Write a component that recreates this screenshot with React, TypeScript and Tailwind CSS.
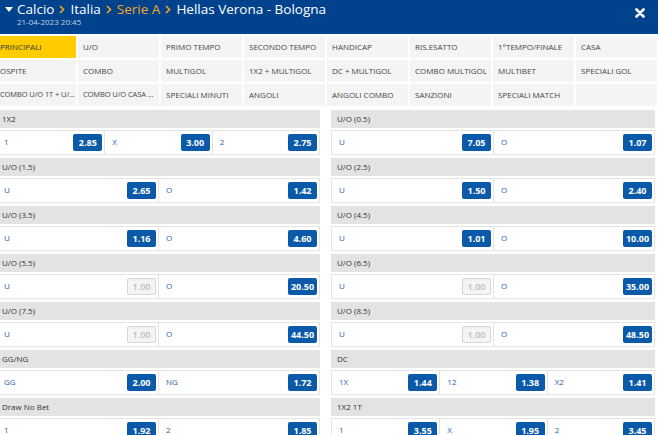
import React from "react";

type Sel = { l: string; v: string; d?: boolean };
type Market = { t: string; s: Sel[] };

const left: Market[] = [
  { t: "1X2", s: [{ l: "1", v: "2.85" }, { l: "X", v: "3.00" }, { l: "2", v: "2.75" }] },
  { t: "U/O (1.5)", s: [{ l: "U", v: "2.65" }, { l: "O", v: "1.42" }] },
  { t: "U/O (3.5)", s: [{ l: "U", v: "1.16" }, { l: "O", v: "4.60" }] },
  { t: "U/O (5.5)", s: [{ l: "U", v: "1.00", d: true }, { l: "O", v: "20.50" }] },
  { t: "U/O (7.5)", s: [{ l: "U", v: "1.00", d: true }, { l: "O", v: "44.50" }] },
  { t: "GG/NG", s: [{ l: "GG", v: "2.00" }, { l: "NG", v: "1.72" }] },
  { t: "Draw No Bet", s: [{ l: "1", v: "1.92" }, { l: "2", v: "1.85" }] },
];

const right: Market[] = [
  { t: "U/O (0.5)", s: [{ l: "U", v: "7.05" }, { l: "O", v: "1.07" }] },
  { t: "U/O (2.5)", s: [{ l: "U", v: "1.50" }, { l: "O", v: "2.40" }] },
  { t: "U/O (4.5)", s: [{ l: "U", v: "1.01" }, { l: "O", v: "10.00" }] },
  { t: "U/O (6.5)", s: [{ l: "U", v: "1.00", d: true }, { l: "O", v: "35.00" }] },
  { t: "U/O (8.5)", s: [{ l: "U", v: "1.00", d: true }, { l: "O", v: "48.50" }] },
  { t: "DC", s: [{ l: "1X", v: "1.44" }, { l: "12", v: "1.38" }, { l: "X2", v: "1.41" }] },
  { t: "1X2 1T", s: [{ l: "1", v: "3.55" }, { l: "X", v: "1.95" }, { l: "2", v: "3.45" }] },
];

const tabs = [
  "PRINCIPALI", "U/O", "PRIMO TEMPO", "SECONDO TEMPO", "HANDICAP", "RIS.ESATTO", "1°TEMPO/FINALE", "CASA",
  "OSPITE", "COMBO", "MULTIGOL", "1X2 + MULTIGOL", "DC + MULTIGOL", "COMBO MULTIGOL", "MULTIBET", "SPECIALI GOL",
  "COMBO U/O 1T + U/...", "COMBO U/O CASA ...", "SPECIALI MINUTI", "ANGOLI", "ANGOLI COMBO", "SANZIONI", "SPECIALI MATCH", "",
];

function Chev() {
  return (
    <svg width="6" height="9" viewBox="0 0 6 9" className="mx-[5px] shrink-0">
      <polyline points="1,1 4.5,4.5 1,8" fill="none" stroke="#f5a623" strokeWidth="1.6" />
    </svg>
  );
}

function Odd({ v, d }: { v: string; d?: boolean }) {
  if (d)
    return (
      <div className="w-[29px] h-[17px] rounded-[2px] border border-[#d6d6d6] bg-[#f4f4f4] text-[#bdbdbd] text-[9px] font-semibold flex items-center justify-center">
        {v}
      </div>
    );
  return (
    <div className="w-[29px] h-[17px] rounded-[2px] bg-[#0b5aa9] text-white text-[9px] font-bold flex items-center justify-center">
      {v}
    </div>
  );
}

function MarketBlock({ m }: { m: Market }) {
  return (
    <div className="mb-[3px]">
      <div className="h-[18px] bg-[#e3e3e3] pl-[6px] flex items-center text-[8px] text-[#333]">{m.t}</div>
      <div
        className={
          "mt-[2px] h-[25px] bg-white border border-[#e4e4e4] grid " +
          (m.s.length === 3 ? "grid-cols-3" : "grid-cols-2")
        }
      >
        {m.s.map((s, i) => (
          <div
            key={i}
            className={
              "flex items-center justify-between pl-[7px] pr-[2px] " + (i > 0 ? "border-l border-[#e4e4e4]" : "")
            }
          >
            <span className="text-[8px] text-[#2a63ae] -mt-[2px]">{s.l}</span>
            <Odd v={s.v} d={s.d} />
          </div>
        ))}
      </div>
    </div>
  );
}

export default function App() {
  return (
    <div
      className="w-[658px] h-[435px] overflow-hidden bg-white"
      style={{ fontFamily: '"Open Sans", "Noto Sans", sans-serif' }}
    >
      <div className="h-[34px] bg-[#00428c] pl-[5px] relative">
        <div className="flex items-center h-[18px] pt-[1px] text-[13.5px] text-white leading-none">
          <svg width="8" height="6" viewBox="0 0 8 6" className="mr-[4px]">
            <polygon points="0,0 8,0 4,5" fill="#ffffff" />
          </svg>
          <span>Calcio</span>
          <Chev />
          <span>Italia</span>
          <Chev />
          <span className="text-[#f5a623]">Serie A</span>
          <Chev />
          <span>Hellas Verona - Bologna</span>
        </div>
        <div className="pl-[12px] text-[8px] text-[#c7d1e2] leading-none">21-04-2023 20:45</div>
        <svg width="10" height="10" viewBox="0 0 10 10" className="absolute right-[13px] top-[8px]">
          <path d="M1.5 1.5 L8.5 8.5 M8.5 1.5 L1.5 8.5" stroke="#ffffff" strokeWidth="2.6" strokeLinecap="round" />
        </svg>
      </div>

      <div className="-ml-[5px] w-[662px] mt-[2px] grid grid-cols-8 gap-[2px]">
        {tabs.map((t, i) => (
          <div
            key={i}
            className={
              "h-[22px] flex items-center pl-[5px] overflow-hidden whitespace-nowrap " +
              (i === 16 || i === 17 ? "text-[7.5px] tracking-[-0.1px] " : "text-[8px] ") +
              (i === 0 ? "bg-[#ffcc00] text-[#333]" : "bg-[#f4f4f4] text-[#444]")
            }
          >
            <span>{t}</span>
          </div>
        ))}
      </div>

      <div className="-ml-[4px] w-[659px] mt-[4px] grid grid-cols-[324px_324px] gap-x-[11px]">
        <div>
          {left.map((m, i) => (
            <MarketBlock key={i} m={m} />
          ))}
        </div>
        <div>
          {right.map((m, i) => (
            <MarketBlock key={i} m={m} />
          ))}
        </div>
      </div>
    </div>
  );
}
